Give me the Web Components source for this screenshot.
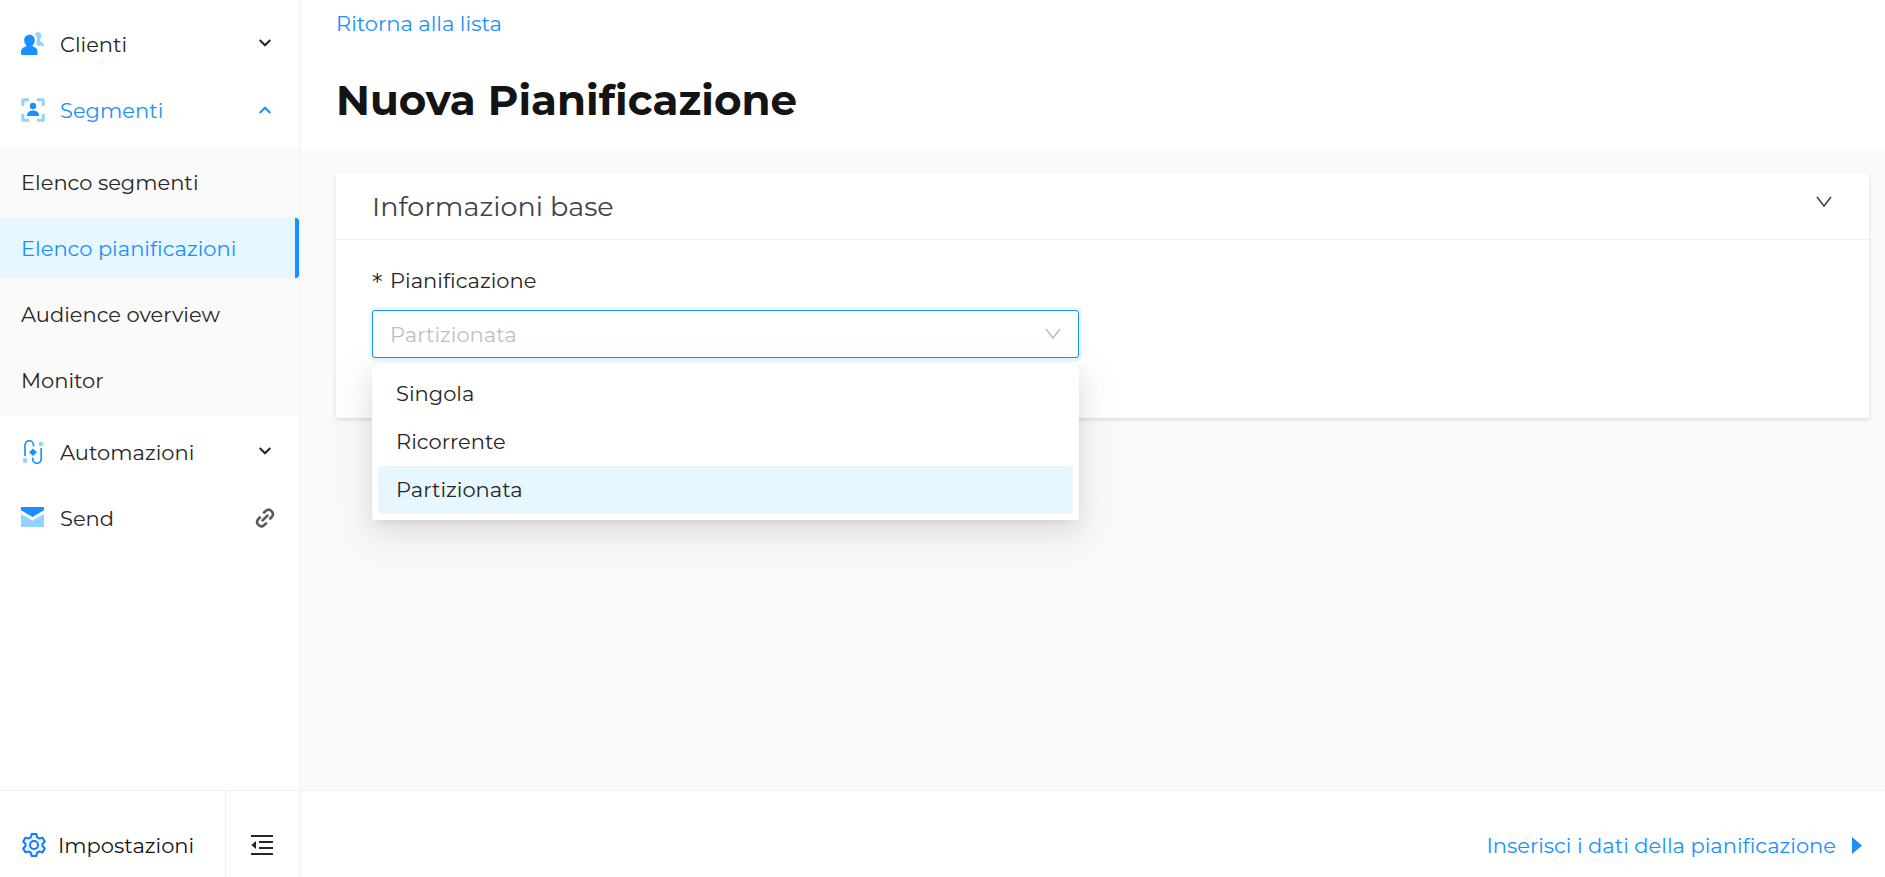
<!DOCTYPE html>
<html lang="it">
<head>
<meta charset="utf-8">
<meta name="viewport" content="width=device-width, initial-scale=1">
<title>Nuova Pianificazione</title>
<style>
    :root {
        --primary-color: #1890ff;
        --primary-light: #91d5ff;
        --primary-bg: #e6f7ff;
        --text-color: #262626;
        --border-color: #f0f0f0;
        --page-bg: #fafafa;
    }

    body {
        margin: 0;
        font-family: Montserrat, Inter, sans-serif;
        font-size: 21px;
        line-height: 33px;
        font-variant-ligatures: none;
        color: var(--text-color);
        background: var(--page-bg);
    }
</style>
</head>
<body>
<app-shell>
    <side-menu slot="menu">
        <menu-group label="Clienti" icon="clients" arrow="down"></menu-group>
        <menu-group label="Segmenti" icon="segments" arrow="up" active>
            <menu-link>Elenco segmenti</menu-link>
            <menu-link selected>Elenco pianificazioni</menu-link>
            <menu-link>Audience overview</menu-link>
            <menu-link>Monitor</menu-link>
        </menu-group>
        <menu-group label="Automazioni" icon="automation" arrow="down"></menu-group>
        <menu-group label="Send" icon="mail" arrow="link"></menu-group>
    </side-menu>
    <menu-footer slot="menu-footer">Impostazioni</menu-footer>
    <page-header slot="header" back="Ritorna alla lista">Nuova Pianificazione</page-header>
    <info-panel label="Informazioni base">
        <select-field label="Pianificazione" value="Partizionata" options="Singola,Ricorrente,Partizionata"></select-field>
    </info-panel>
    <step-footer slot="footer">Inserisci i dati della pianificazione</step-footer>
</app-shell>

<script>
const icons = {
    clients: `<svg width="24" height="24" viewBox="0 0 24 24">
        <path fill="#91d5ff" d="M14 1.500C15.500-.2 19-.3 20 2c1 2-.1 4.500-.8 5.700v1.600c2.300.7 3.800 1.700 3.800 4.700h-5.800c-.7-1-1.200-1.500-2.200-2.200 1.400-3 1.600-7-.9-9.300z"/>
        <path fill="#1890ff" d="M8.500 2.800c3.300 0 5.300 2.300 5.300 5.400 0 2-.8 3.800-2.100 4.900v1.300c3 .6 4.800 2.100 4.800 6.100v1c0 1-.5 1.500-1.300 1.500H1.300C.5 23 0 22.500 0 21.500v-1c0-4 2-5.500 5.200-6.100v-1.300c-1.300-1.100-2-2.900-2-4.900 0-3.100 2-5.400 5.300-5.400z"/></svg>`,
    segments: `<svg width="24" height="24" viewBox="0 0 24 24">
        <path fill="none" stroke="#91d5ff" stroke-width="3" stroke-linejoin="round" d="M1.800 8V1.800H8M16 1.800h6.200V8M22.200 16v6.200H16M8 22.200H1.800V16"/>
        <circle cx="12" cy="8" r="3.200" fill="#1890ff"/>
        <path fill="#1890ff" d="M6 18c0-4 2.600-5.500 6-5.500s6 1.500 6 5.500z"/></svg>`,
    automation: `<svg width="24" height="24" viewBox="0 0 24 24">
        <g fill="none" stroke="#1890ff" stroke-width="1.700"><path d="M4 16V5a4.200 4.200 0 0 1 8.500 0v1.500"/><path d="M20.200 8v11a4.200 4.200 0 0 1-8.500 0v-1.500"/></g>
        <path fill="#1890ff" d="m12 8.500 4 3.700-4 3.700-4-3.700z"/>
        <circle cx="20" cy="4" r="2.400" fill="#91d5ff"/><circle cx="4" cy="20.500" r="2.400" fill="#91d5ff"/></svg>`,
    mail: `<svg width="24" height="24" viewBox="0 0 24 24">
        <path fill="#91d5ff" d="M0 8l11.500 6.500L23 8v13H0z"/>
        <path fill="#1890ff" d="M0 1h23v3.300L11.500 11 0 4.300z"/></svg>`,
    down: `<svg width="12" height="8" viewBox="0 0 12 8"><path fill="none" stroke="currentColor" stroke-width="2" d="M.7 1 6 6.300 11.300 1"/></svg>`,
    up: `<svg width="12" height="8" viewBox="0 0 12 8"><path fill="none" stroke="currentColor" stroke-width="2" d="M.7 7 6 1.700 11.300 7"/></svg>`,
    link: `<svg width="20" height="20" viewBox="0 0 20 20"><g fill="none" stroke="#595959" stroke-width="2.600">
        <path d="M8.200 5.200 11 2.800c3.800-3.200 9 2 5.900 5.800l-2.400 2.800"/><path d="M11.800 14.800 9 17.200c-3.800 3.200-9-2-5.900-5.800l2.400-2.800"/><path d="m6.800 13.200 6.400-6.400"/></g></svg>`,
    gear: `<svg width="24" height="24" viewBox="0 0 24 24"><path fill="#e6f7ff" stroke="#1677ff" stroke-width="2" stroke-linejoin="round" d="M9.700 1h4.600l.9 3.300 2.100 1.200 3.200-.9 2.300 3.900L20.500 11v2l2.300 2.500-2.300 3.900-3.200-.9-2.100 1.200-.9 3.300H9.700l-.9-3.300-2.100-1.200-3.200.9-2.300-3.900L3.500 13v-2L1.200 8.500l2.300-3.900 3.200.9 2.100-1.200z"/>
        <circle cx="12" cy="12" r="4" fill="#fff" stroke="#1677ff" stroke-width="2"/></svg>`,
    fold: `<svg width="22" height="20" viewBox="0 0 22 20"><path stroke="#262626" stroke-width="2" d="M0 1h22M8 7h14M8 13h14M0 19h22"/><path fill="#262626" d="M.3 10 5 6v8z"/></svg>`,
    thin: `<svg width="16" height="12" viewBox="0 0 16 12"><path fill="none" stroke="currentColor" stroke-width="1.600" d="M1 1l7 9 7-9"/></svg>`,
    next: `<svg width="10" height="18" viewBox="0 0 10 18"><path fill="currentColor" d="M0 1v17l10-8.500z"/></svg>`
};

class AppShell extends HTMLElement {
    constructor() {
        super();
        this.attachShadow({ mode: 'open' });
        this.shadowRoot.innerHTML = `
            <style>
                :host {
                    display: grid;
                    grid-template-columns: 300px 1fr;
                    grid-template-rows: 1fr auto;
                    height: 100vh;
                }

                aside {
                    background: #fff;
                    border-right: 1px solid var(--border-color);
                    overflow: hidden;
                }

                .content {
                    padding: 24px 16px 24px 36px;
                }
            </style>
            <aside><slot name="menu"></slot></aside>
            <main>
                <slot name="header"></slot>
                <div class="content"><slot></slot></div>
            </main>
            <slot name="menu-footer"></slot>
            <slot name="footer"></slot>
        `;
    }
}

class SideMenu extends HTMLElement {
    constructor() {
        super();
        this.attachShadow({ mode: 'open' });
        this.shadowRoot.innerHTML = `
            <style>
                :host { display: block; }
                nav {
                    display: flex;
                    flex-direction: column;
                    gap: 6px;
                    padding-top: 14px;
                }
            </style>
            <nav><slot></slot></nav>
        `;
    }
}

class MenuGroup extends HTMLElement {
    constructor() {
        super();
        this.attachShadow({ mode: 'open' });
        this.shadowRoot.innerHTML = `
            <style>
                :host { display: block; }
                :host([active]) button { color: var(--primary-color); }

                button {
                    display: flex;
                    align-items: center;
                    gap: 15px;
                    width: 100%;
                    height: 60px;
                    padding: 0 28px 0 21px;
                    border: none;
                    background: none;
                    font: inherit;
                    font-variant-ligatures: none;
                    color: inherit;
                    cursor: pointer;
                }

                .label { flex: 1; text-align: left; }
                .arrow { display: flex; justify-content: center; width: 12px; }
                .arrow.down { padding-bottom: 3px; }

                .items {
                    display: flex;
                    flex-direction: column;
                    gap: 6px;
                    margin-top: 6px;
                    padding: 6px 0;
                    background: var(--page-bg);
                }

                svg { flex: none; }
            </style>
            <button type="button">
                ${icons[this.getAttribute('icon')]}
                <span class="label">${this.getAttribute('label')}</span>
                <span class="arrow ${this.getAttribute('arrow')}">${icons[this.getAttribute('arrow')]}</span>
            </button>
            ${this.hasAttribute('active') ? '<div class="items"><slot></slot></div>' : ''}
        `;
    }
}

class MenuLink extends HTMLElement {
    constructor() {
        super();
        this.attachShadow({ mode: 'open' });
        this.shadowRoot.innerHTML = `
            <style>
                :host { display: block; }

                a {
                    display: flex;
                    align-items: center;
                    height: 60px;
                    padding-left: 21px;
                    color: inherit;
                    text-decoration: none;
                    box-sizing: border-box;
                }

                :host([selected]) a {
                    color: var(--primary-color);
                    background: var(--primary-bg);
                    border-right: 4px solid var(--primary-color);
                    border-radius: 0 3px 3px 0;
                }
            </style>
            <a href="#"><slot></slot></a>
        `;
    }
}

class MenuFooter extends HTMLElement {
    constructor() {
        super();
        this.attachShadow({ mode: 'open' });
        this.shadowRoot.innerHTML = `
            <style>
                :host {
                    display: flex;
                    height: 86px;
                    background: #fff;
                    border-top: 1px solid var(--border-color);
                    border-right: 1px solid var(--border-color);
                    color: #141414;
                }

                button {
                    display: flex;
                    align-items: center;
                    gap: 12px;
                    padding: 22px 0 0 22px;
                    border: none;
                    background: none;
                    font: inherit;
                    font-variant-ligatures: none;
                    color: inherit;
                    cursor: pointer;
                }

                .settings { flex: 1; }
                .fold {
                    width: 74px;
                    padding: 22px 0 0 25px;
                    border-left: 1px solid var(--border-color);
                }
            </style>
            <button type="button" class="settings">${icons.gear}<slot></slot></button>
            <button type="button" class="fold" aria-label="Comprimi menu">${icons.fold}</button>
        `;
    }
}

class PageHeader extends HTMLElement {
    constructor() {
        super();
        this.attachShadow({ mode: 'open' });
        this.shadowRoot.innerHTML = `
            <style>
                :host {
                    display: block;
                    padding: 7px 36px 21px;
                    background: #fff;
                }

                a {
                    display: inline-block;
                    color: var(--primary-color);
                    text-decoration: none;
                }

                h1 {
                    margin: 32px 0 0;
                    font-size: 42px;
                    line-height: 56px;
                    font-weight: 700;
                    color: #141414;
                }
            </style>
            <a href="#">${this.getAttribute('back')}</a>
            <h1><slot></slot></h1>
        `;
    }
}

class InfoPanel extends HTMLElement {
    constructor() {
        super();
        this.attachShadow({ mode: 'open' });
        this.shadowRoot.innerHTML = `
            <style>
                :host {
                    display: block;
                    background: #fff;
                    border-radius: 3px;
                    box-shadow: 0 2px 4px rgba(0, 21, 41, 0.12);
                }

                header {
                    display: flex;
                    align-items: center;
                    justify-content: space-between;
                    height: 66px;
                    padding: 0 36px;
                    border-bottom: 1px solid var(--border-color);
                }

                h2 {
                    margin: 0;
                    font-size: 27px;
                    font-weight: 400;
                    color: #434343;
                }

                button {
                    padding: 0 1px 8px;
                    border: none;
                    background: none;
                    color: #434343;
                    cursor: pointer;
                }

                svg { display: block; }
                .body { padding: 24px 36px 60px; }
            </style>
            <header>
                <h2>${this.getAttribute('label')}</h2>
                <button type="button" aria-label="Comprimi">${icons.thin}</button>
            </header>
            <div class="body"><slot></slot></div>
        `;
    }
}

class SelectField extends HTMLElement {
    constructor() {
        super();
        this.attachShadow({ mode: 'open' });
        const value = this.getAttribute('value');
        const options = this.getAttribute('options').split(',');
        this.shadowRoot.innerHTML = `
            <style>
                :host {
                    display: block;
                    width: calc(50% - 24px);
                }

                label {
                    display: flex;
                    gap: 6px;
                    margin-bottom: 13px;
                }

                .required {
                    width: 12px;
                    padding-top: 4px;
                    font-family: "DejaVu Sans", sans-serif;
                    line-height: 29px;
                }

                .control { position: relative; }

                select {
                    display: block;
                    width: 100%;
                    height: 48px;
                    padding: 0 48px 0 17px;
                    appearance: none;
                    border: 1px solid var(--primary-color);
                    border-radius: 3px;
                    outline: none;
                    box-shadow: 0 0 0 3px var(--primary-bg);
                    background: #fff;
                    font: inherit;
                    color: #bfbfbf;
                }

                .arrow {
                    position: absolute;
                    top: 18px;
                    right: 18px;
                    color: #bfbfbf;
                    pointer-events: none;
                }

                svg { display: block; }

                ul {
                    position: absolute;
                    top: 54px;
                    left: 0;
                    right: 0;
                    margin: 0;
                    padding: 6px;
                    list-style: none;
                    background: #fff;
                    border-radius: 3px;
                    box-shadow: 0 4px 9px -6px rgba(0, 0, 0, 0.12), 0 9px 24px rgba(0, 0, 0, 0.08), 0 14px 42px 12px rgba(0, 0, 0, 0.05);
                }

                li {
                    padding: 0 18px;
                    line-height: 48px;
                    border-radius: 3px;
                    cursor: pointer;
                }

                li[aria-selected="true"] { background: var(--primary-bg); }
            </style>
            <label for="field"><span class="required">*</span>${this.getAttribute('label')}</label>
            <div class="control">
                <select id="field" required>
                    ${options.map(o => `<option${o === value ? ' selected' : ''}>${o}</option>`).join('')}
                </select>
                <span class="arrow">${icons.thin}</span>
                <ul role="listbox">
                    ${options.map(o => `<li role="option" aria-selected="${o === value}">${o}</li>`).join('')}
                </ul>
            </div>
        `;

        this.shadowRoot.querySelector('ul').addEventListener('click', (e) => {
            const item = e.target.closest('li');
            if (!item) return;
            this.shadowRoot.querySelectorAll('li').forEach(li => {
                li.setAttribute('aria-selected', li === item);
            });
            this.shadowRoot.getElementById('field').value = item.textContent;
        });
    }
}

class StepFooter extends HTMLElement {
    constructor() {
        super();
        this.attachShadow({ mode: 'open' });
        this.shadowRoot.innerHTML = `
            <style>
                :host {
                    display: flex;
                    justify-content: flex-end;
                    padding: 22px 23px 0 36px;
                    background: #fff;
                    border-top: 1px solid var(--border-color);
                }

                button {
                    display: flex;
                    align-items: center;
                    gap: 16px;
                    padding: 0;
                    border: none;
                    background: none;
                    font: inherit;
                    font-variant-ligatures: none;
                    color: var(--primary-color);
                    cursor: pointer;
                }
            </style>
            <button type="button"><slot></slot>${icons.next}</button>
        `;
    }
}

customElements.define('app-shell', AppShell);
customElements.define('side-menu', SideMenu);
customElements.define('menu-group', MenuGroup);
customElements.define('menu-link', MenuLink);
customElements.define('menu-footer', MenuFooter);
customElements.define('page-header', PageHeader);
customElements.define('info-panel', InfoPanel);
customElements.define('select-field', SelectField);
customElements.define('step-footer', StepFooter);
</script>
</body>
</html>
